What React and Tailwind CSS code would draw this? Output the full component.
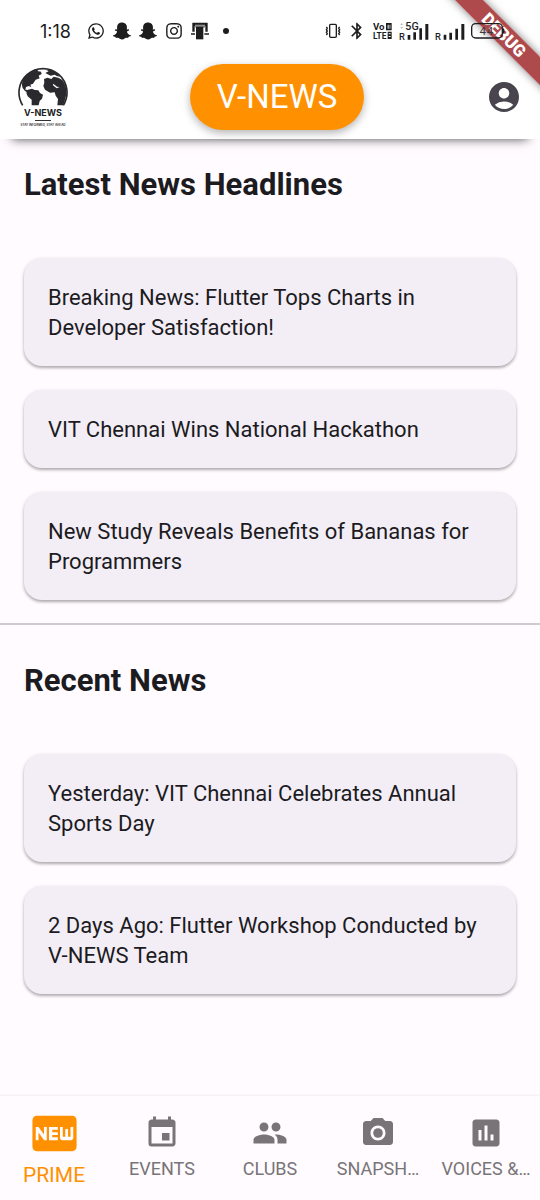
import React from "react";
import {
  MdAccountCircle,
  MdBluetooth,
  MdCameraAlt,
  MdEvent,
  MdFiberNew,
  MdPeople,
  MdPoll,
} from "react-icons/md";
import { FaInstagram, FaSnapchatGhost, FaWhatsapp } from "react-icons/fa";

const latest = [
  "Breaking News: Flutter Tops Charts in Developer Satisfaction!",
  "VIT Chennai Wins National Hackathon",
  "New Study Reveals Benefits of Bananas for Programmers",
];

const recent = [
  "Yesterday: VIT Chennai Celebrates Annual Sports Day",
  <>
    2 Days Ago: Flutter Workshop Conducted by <span className="whitespace-nowrap">V-NEWS</span> Team
  </>,
];

const tabs = [
  { label: "EVENTS", Icon: MdEvent },
  { label: "CLUBS", Icon: MdPeople },
  { label: "SNAPSH…", Icon: MdCameraAlt },
  { label: "VOICES &…", Icon: MdPoll },
];

function PrinterIcon() {
  return (
    <svg width="18" height="18" viewBox="0 0 54 54" aria-hidden="true">
      <path d="M4 2h46v27h-7V12H11v17H4z" fill="#1d1d1d" />
      <path d="M12 8h30v9H12z" fill="#8a8a8a" />
      <path d="M15 14h22v38H15z" fill="#1d1d1d" />
      <path d="M0 34h12v4H0zM40 34h14v4H40z" fill="#1d1d1d" />
    </svg>
  );
}

function VibrateIcon() {
  return (
    <svg width="16" height="16" viewBox="0 0 48 48" fill="none" stroke="#1d1d1d" aria-hidden="true">
      <rect x="14" y="4" width="20" height="39" rx="3" strokeWidth="4" />
      <path d="M4 12l3 4-3 4 3 4-3 4 3 4-3 4M44 12l-3 4 3 4-3 4 3 4-3 4 3 4" strokeWidth="4" />
    </svg>
  );
}

function VolteIcon() {
  return (
    <svg width="20" height="18" viewBox="0 0 60 54" className="font-['Roboto',sans-serif] font-bold" aria-hidden="true">
      <text x="0" y="24" fontSize="29" fill="#1d1d1d">Vo</text>
      <text x="0" y="51" fontSize="25" fill="#1d1d1d">LTE</text>
      <path d="M39 3h17v22H39zM44 29h12v22H44z" fill="#1d1d1d" />
      <path d="M44 8h3v12h-3zM50 8h2v12h-2zM47 34h6v3h-6zM47 42h6v3h-6z" fill="#fff" />
    </svg>
  );
}

function FiveGIcon() {
  return (
    <svg width="30" height="20" viewBox="0 0 90 60" className="font-['Roboto',sans-serif] font-medium" fill="#1d1d1d" aria-hidden="true">
      <path d="M3 12l5-6 5 6zM3 18l5 6 5-6z" fill="#c4c4c4" />
      <text x="19" y="28" fontSize="32">5G</text>
      <text x="0" y="57" fontSize="28">R</text>
      <path d="M26 42h8v14h-8zM43 34h8v22h-8zM61 22h8v34h-8zM79 9h9v47h-9z" />
    </svg>
  );
}

function SignalIcon() {
  return (
    <svg width="30" height="20" viewBox="0 0 90 60" className="font-['Roboto',sans-serif] font-medium" fill="#1d1d1d" aria-hidden="true">
      <text x="0" y="57" fontSize="28">R</text>
      <path d="M26 41h8v15h-8zM43 35h8v21h-8zM61 23h8v33h-8zM79 9h9v47h-9z" />
    </svg>
  );
}

function BatteryIcon() {
  return (
    <svg width="34" height="16" viewBox="0 0 102 48" className="font-['Inter',sans-serif]" aria-hidden="true">
      <rect x="2" y="2" width="92" height="43" rx="12" fill="none" stroke="#1d1d1d" strokeWidth="4" />
      <path d="M96 15c6 3 6 15 0 18z" fill="#1d1d1d" />
      <text x="25" y="35" fontSize="33" fill="#3a3a3a">44</text>
    </svg>
  );
}

function Logo() {
  return (
    <div className="flex w-[50px] flex-col items-center font-['Inter',sans-serif] text-[#222]">
      <svg width="50" height="39" viewBox="0 0 150 117" aria-hidden="true">
        <path d="M14 115A72 72 0 1 1 136 115" fill="none" stroke="#2a2a2e" strokeWidth="5" />
        <g fill="#2a2a2e">
          <path d="M30 20C40 11 52 7 64 5l-6 7 11 2 2 7-9 5 3 8-12 4-8 12-8 3 3 8-7-4-9 3-2 8 9 1 3 8 8 4-8-1-13-8-7-9C8 44 17 30 30 20z" />
          <path d="M30 68l12-3 8 4 11 1 5 8 9 5-3 12-7 7-3 13H41V98L29 88l-4-10z" />
          <path d="M82 18l10-5-8-5 18 2 14 8 10 11-10-2-6-4-12 3-9-4z" />
          <path d="M78 36l11-4 11 4 7-7 14 3 12 7c9 12 13 24 12 38-1 14-5 28-10 38h-17l2-19-7-10-3-10-14 1-15-9-5-11 3-10z" />
        </g>
        <path d="M106 50l11 9 8 1-9 4-11-9z" fill="#fff" />
      </svg>
      <span className="whitespace-nowrap text-[9px] font-bold leading-[14px]">V-NEWS</span>
      <span className="h-px w-4 bg-[#333]" />
      <span className="mt-px whitespace-nowrap text-[3px] font-semibold leading-[6px]">STAY INFORMED, STAY AHEAD</span>
    </div>
  );
}

function NewsSection({ title, items, className }) {
  return (
    <section className={className}>
      <h2 className="text-[31px] font-bold leading-10 text-[#1c1b1f]">{title}</h2>
      <ul className="mt-[53px] flex flex-col gap-6">
        {items.map((item, index) => (
          <li
            key={index}
            className="rounded-[18px] bg-[#f3eef5] px-6 pb-[23px] pt-[25px] text-[22px] leading-[30px] text-[#1c1b1f] shadow-[0_2px_3px_rgba(0,0,0,0.28),0_1px_5px_rgba(0,0,0,0.08)]"
          >
            {item}
          </li>
        ))}
      </ul>
    </section>
  );
}

export default function App() {
  return (
    <div className="relative flex min-h-screen flex-col bg-[#fffbff] font-['Roboto',sans-serif]">
      <header className="bg-white shadow-[0_12px_10px_-12px_rgba(0,0,0,0.7)]">
        <div className="relative z-10 flex h-[62px] items-center justify-between pl-10 pr-[35px] text-[#1d1d1d]">
          <div className="flex items-center">
            <span className="w-[47px] font-['Inter',sans-serif] text-[18px]">1:18</span>
            <div className="flex items-center gap-2">
              <FaWhatsapp size={18} />
              <FaSnapchatGhost size={18} />
              <FaSnapchatGhost size={18} />
              <FaInstagram size={18} />
              <PrinterIcon />
              <span className="ml-1.5 size-1.5 rounded-full bg-[#1d1d1d]" />
            </div>
          </div>
          <div className="flex items-center gap-1.5">
            <VibrateIcon />
            <MdBluetooth size={20} />
            <VolteIcon />
            <FiveGIcon />
            <SignalIcon />
            <BatteryIcon />
          </div>
        </div>
        <div className="flex h-[77px] items-center justify-between pb-[7px] pl-[18px] pr-[18px]">
          <Logo />
          <h1 className="flex h-[66px] items-center rounded-full bg-[#ff9100] px-[27px] text-[33px] text-white shadow-[0_3px_9px_rgba(0,0,0,0.3)]">
            V-NEWS
          </h1>
          <button type="button" aria-label="Account" className="text-[#48454e]">
            <MdAccountCircle size={36} />
          </button>
        </div>
      </header>

      <main className="flex-1">
        <NewsSection title="Latest News Headlines" items={latest} className="px-6 pb-[23px] pt-[26px]" />
        <hr className="border-t-2 border-[#cfcbd0]" />
        <NewsSection title="Recent News" items={recent} className="px-6 pb-6 pt-9" />
      </main>

      <nav className="grid h-[104px] grid-cols-5 shadow-[0_-1px_2px_rgba(0,0,0,0.06)]">
        <button type="button" aria-current="page" className="flex flex-col items-center pt-[11px] text-[#ff9100]">
          <MdFiberNew size={53} />
          <span className="text-[21px] leading-[30px]">PRIME</span>
        </button>
        {tabs.map(({ label, Icon }) => (
          <button key={label} type="button" className="flex flex-col items-center pt-[19px] text-[#787478]">
            <Icon size={36} />
            <span className="mt-1.5 whitespace-nowrap text-[18px] leading-6">{label}</span>
          </button>
        ))}
      </nav>

      <div className="pointer-events-none absolute right-0 top-0 size-[120px] overflow-hidden">
        <div className="absolute left-1 top-[25px] w-40 rotate-45 bg-[#9a1d1f]/80 text-center text-[17px] font-black leading-5 text-white shadow-[0_0_9px_rgba(0,0,0,0.5)]">
          DEBUG
        </div>
      </div>
    </div>
  );
}
